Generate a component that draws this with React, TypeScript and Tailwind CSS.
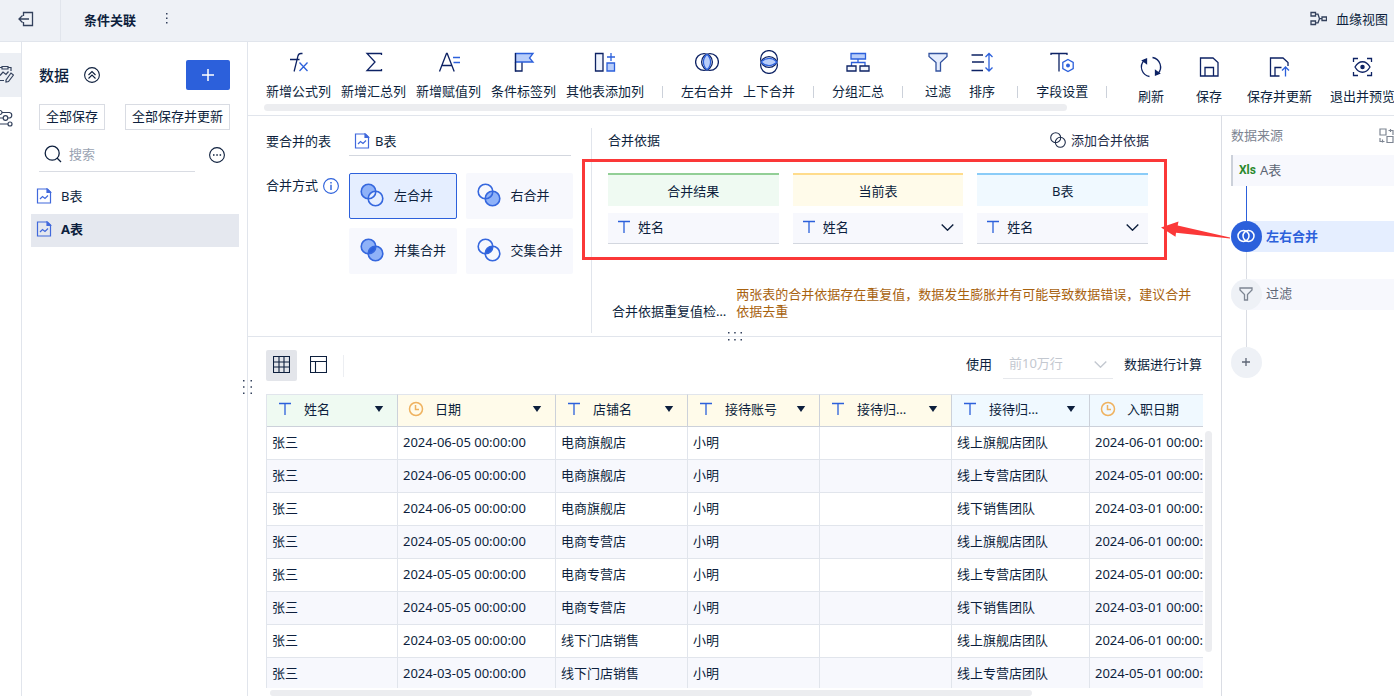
import React from "react";

type IconProps = { className?: string };
type ToolItem = { label: string; icon: React.ReactNode };

const NAVY = "#0d2264";
const BLUE = "#2c60db";

function Svg({ size, box, children, color = "currentColor", width = 1.3 }: { size: string; box: string; children: React.ReactNode; color?: string; width?: number }) {
  return (
    <svg className={`${size} shrink-0`} viewBox={box} fill="none" stroke={color} strokeWidth={width} aria-hidden="true">
      {children}
    </svg>
  );
}

const Tool = ({ children }: { children: React.ReactNode }) => (
  <Svg size="size-6" box="0 0 24 24" color={NAVY}>{children}</Svg>
);

const toolGroups: ToolItem[][] = [
  [
    {
      label: "新增公式列",
      icon: (
        <Tool>
          <path d="M15.500 3.500h-1.600c-1.800 0-2.600 1-3 2.700L7.100 21.500M3 9.500h9.500" />
          <path d="m12.500 12.500 8 8.500M20.500 12.500l-8 8.500" stroke={BLUE} />
        </Tool>
      ),
    },
    { label: "新增汇总列", icon: <Tool><path d="M19.500 5V3.500H5L13 12l-8 8.500h14.500V19" /></Tool> },
    {
      label: "新增赋值列",
      icon: (
        <Tool>
          <path d="m2.500 21.500 7-18h.7l7 18M5 15.500h9.800" />
          <path d="M16 7.500h7M16.500 12.500h6.500" stroke={BLUE} />
        </Tool>
      ),
    },
    {
      label: "条件标签列",
      icon: (
        <Tool>
          <path d="M3.500 12v9h6.500v-9" />
          <path d="M3.500 3.500h17.500l-3.500 4.500 3.500 4H3.500z" fill="#b9cefa" stroke={BLUE} />
          <path d="M3.500 3v18.500" />
        </Tool>
      ),
    },
    {
      label: "其他表添加列",
      icon: (
        <Tool>
          <path d="M2.500 3.500h7.500V21H2.500z" fill="#eef3fd" />
          <path d="M14 13h7.500v8H14z" fill="#b9cefa" stroke={BLUE} />
          <path d="M18 3v8M14 7h8" stroke={BLUE} />
        </Tool>
      ),
    },
  ],
  [
    {
      label: "左右合并",
      icon: (
        <Tool>
          <circle cx="9" cy="12" r="8.400" />
          <circle cx="15" cy="12" r="8.400" />
          <path d="M12 4.200c4.800 4.500 4.800 11.100 0 15.600-4.800-4.500-4.800-11.100 0-15.600" fill="#b9cefa" stroke={BLUE} />
        </Tool>
      ),
    },
    {
      label: "上下合并",
      icon: (
        <Tool>
          <circle cx="12" cy="9" r="8.400" />
          <circle cx="12" cy="15" r="8.400" />
          <path d="M4.200 12c4.500-4.800 11.100-4.800 15.600 0-4.500 4.800-11.100 4.800-15.600 0" fill="#b9cefa" stroke={BLUE} />
        </Tool>
      ),
    },
  ],
  [
    {
      label: "分组汇总",
      icon: (
        <Tool>
          <path d="M5 3.500h14.500v5.500H5z" fill="#b9cefa" stroke={BLUE} />
          <path d="M12 9v3.500M5.500 16v-3.500H19V16" stroke={BLUE} />
          <path d="M1 16h9v5H1zM14 16h9v5h-9z" fill="#f3f6fd" />
        </Tool>
      ),
    },
  ],
  [
    { label: "过滤", icon: <Tool><path d="M3 3.500h18v3l-6.500 6V21H10v-8.500l-7-6z" fill="#e4ecfd" stroke="#33539f" /></Tool> },
    {
      label: "排序",
      icon: (
        <Tool>
          <path d="M1.500 5H13M2 12h12M1.500 20.500H13" />
          <path d="M19 4v16.500M15.500 7 19 3.500 22.500 7M15.500 17.500 19 21l3.500-3.500" stroke={BLUE} />
        </Tool>
      ),
    },
  ],
  [
    {
      label: "字段设置",
      icon: (
        <Tool>
          <path d="M1 5V3.500h16V5M9 3.500v18" />
          <path d="m18 9.500 5.200 3v6L18 21.500l-5.200-3v-6z" fill="#fff" stroke={BLUE} />
          <circle cx="18" cy="15.500" r="1.300" fill={BLUE} stroke={BLUE} />
        </Tool>
      ),
    },
  ],
];

const actions: ToolItem[] = [
  {
    label: "刷新",
    icon: (
      <Tool>
        <path d="M10.500 21.500A9.600 9.600 0 0 1 5 5.500M13.500 2.500A9.600 9.600 0 0 1 19 18.500" />
        <path d="M3.500 5.500 7.500 4v4.500zM20.500 18.500l-4 1.500v-4.500z" fill={NAVY} />
      </Tool>
    ),
  },
  { label: "保存", icon: <Tool><path d="M3.500 3h12.500l5 4.500V21H3.500zM8 21v-8.500h8.500V21" /></Tool> },
  {
    label: "保存并更新",
    icon: (
      <Tool>
        <path d="M12.500 21h-9V3H16l5 4.500V11M8 21v-8.500h6.500" />
        <path d="M18.500 21.500v-9M15 15.500l3.500-3.500 3.500 3.500" stroke={BLUE} />
      </Tool>
    ),
  },
  {
    label: "退出并预览",
    icon: (
      <Tool>
        <path d="M3.500 7V3.500H8M17 3.500h4.500V7M3.500 17v3.500H8M17 20.500h4.500V17" />
        <path d="M5 12c4-7 11-7 15 0-4 7-11 7-15 0z" />
        <circle cx="12.500" cy="12" r="1.600" fill={NAVY} />
      </Tool>
    ),
  },
];

const FileIcon = () => (
  <Svg size="size-4" box="0 0 16 16" color="#4169dc" width={1.2}>
    <path d="M1.500 1h10l3 3v11h-13z" />
    <path d="M11 1v3.500h3.500z" fill="#4169dc" />
    <path d="m4 11 2.500-2.500L9 10.500 12 7.500" />
  </Svg>
);

const TextIcon = () => (
  <Svg size="size-4" box="0 0 16 16" color={BLUE} width={1.3}>
    <path d="M2 2.500h12M8 2.500V14" />
  </Svg>
);

const ClockIcon = () => (
  <Svg size="size-4" box="0 0 16 16" color="#efb25f" width={1.5}>
    <circle cx="8" cy="8" r="6.500" />
    <path d="M7.500 4v4.500H11" />
  </Svg>
);

const Chevron = ({ className = "" }: IconProps) => (
  <svg className={`pointer-events-none absolute h-[7px] w-[13px] ${className}`} viewBox="0 0 13 7" fill="none" stroke="currentColor" strokeWidth="1.4" aria-hidden="true">
    <path d="m.7.500 5.800 5.700L12.300.5" />
  </svg>
);

const FunnelIcon = () => (
  <Svg size="size-4" box="0 0 16 16" color="#7d8592">
    <path d="M2 2h12v2L9.500 8.500V14h-3V8.500L2 4z" />
  </Svg>
);

function JoinIcon({ left, right, mid }: { left: string; right: string; mid: string }) {
  return (
    <Svg size="size-6" box="0 0 24 24" color="#3567de" width={1.6}>
      <circle cx="8.500" cy="8.500" r="7.300" fill={left} stroke="none" />
      <circle cx="15.500" cy="15.500" r="7.300" fill={right} stroke="none" />
      <path d="M8.200 15.800A7.300 7.300 0 0 1 15.800 8.200 7.300 7.300 0 0 1 8.200 15.800z" fill={mid} stroke="none" />
      <circle cx="8.500" cy="8.500" r="7.300" />
      <circle cx="15.500" cy="15.500" r="7.300" />
    </Svg>
  );
}

const joins = [
  { label: "左合并", left: "#8fb2f8", right: "#e5eeff", mid: "#e5eeff" },
  { label: "右合并", left: "none", right: "#8fb2f8", mid: "#8fb2f8" },
  { label: "并集合并", left: "#8fb2f8", right: "#8fb2f8", mid: BLUE },
  { label: "交集合并", left: "none", right: "none", mid: BLUE },
];

const columns = [
  { name: "姓名", date: false, tone: "bg-[#effaf2]", width: "w-[131px]" },
  { name: "日期", date: true, tone: "bg-[#fffbea]", width: "w-[158px]" },
  { name: "店铺名", date: false, tone: "bg-[#fffbea]", width: "w-[132px]" },
  { name: "接待账号", date: false, tone: "bg-[#fffbea]", width: "w-[132px]" },
  { name: "接待归…", date: false, tone: "bg-[#fffbea]", width: "w-[132px]" },
  { name: "接待归…", date: false, tone: "bg-[#f0f9ff]", width: "w-[138px]" },
  { name: "入职日期", date: true, tone: "bg-[#f0f9ff]", width: "w-[158px]" },
];

const rows = [
  ["06-05", "电商旗舰店", "线上旗舰店团队", "06-01"],
  ["06-05", "电商旗舰店", "线上专营店团队", "05-01"],
  ["06-05", "电商旗舰店", "线下销售团队", "03-01"],
  ["05-05", "电商专营店", "线上旗舰店团队", "06-01"],
  ["05-05", "电商专营店", "线上专营店团队", "05-01"],
  ["05-05", "电商专营店", "线下销售团队", "03-01"],
  ["03-05", "线下门店销售", "线上旗舰店团队", "06-01"],
  ["03-05", "线下门店销售", "线上专营店团队", "05-01"],
].map(([date, shop, team, joined]) => ["张三", `2024-${date} 00:00:00`, shop, "小明", "", team, `2024-${joined} 00:00:00`]);

function ToolButton({ item, wide }: { item: ToolItem; wide?: boolean }) {
  return (
    <button className={`flex shrink-0 flex-col items-center gap-2 whitespace-nowrap ${wide ? "min-w-10" : "min-w-[34px]"}`}>
      {item.icon}
      <span>{item.label}</span>
    </button>
  );
}

function Header() {
  return (
    <header className="flex h-[42px] shrink-0 items-center border-b border-[#e1e5ec] bg-[#eef1f6]">
      <button aria-label="退出" className="flex h-full w-[61px] items-center border-r border-[#e1e5ec] pb-1 pl-[18px] text-[#33415c]">
        <Svg size="size-4" box="0 0 16 16">
          <path d="M5.500 5V1.500h9v13h-9V11M11 8H1M4.500 4.500 1 8l3.500 3.500" />
        </Svg>
      </button>
      <h1 className="pb-0.5 pl-[23px] font-bold">条件关联</h1>
      <button aria-label="更多" className="ml-[23px] pb-1.5">
        <svg className="size-4" viewBox="0 0 16 16" fill="#33415c" aria-hidden="true">
          <path d="M7 3h1.500v1.500H7zM7 7.500h1.500V9H7zM7 12h1.500v1.500H7z" />
        </svg>
      </button>
      <button className="mr-1.5 ml-auto flex items-center gap-[9px] pb-1">
        <Svg size="size-[17px]" box="0 0 17 17" color="#33415c">
          <path d="M1 2.500h4.500V6H1zM1 11h4.500v3.500H1zM12 7h4.500v3.500H12zM5.500 4.200H8l1.500 4.500L8 12.800H5.500M9.500 8.700H12" />
        </Svg>
        血缘视图
      </button>
    </header>
  );
}

function Sidebar() {
  return (
    <aside className="w-[226px] shrink-0 border-r border-[#e1e5ec] pt-[18px]">
      <div className="flex items-center pr-[17px] pl-[17px]">
        <h2 className="text-[15px] font-medium">数据</h2>
        <button aria-label="收起" className="ml-[15px]">
          <Svg size="size-4" box="0 0 16 16" width={1.1}>
            <circle cx="8" cy="8" r="7.400" />
            <path d="m4.500 8 3.500-3.500L11.500 8M4.500 11.500 8 8l3.500 3.500" />
          </Svg>
        </button>
        <button aria-label="新增" className="ml-auto flex h-[30px] w-11 items-center justify-center rounded-[2px] bg-[#2c60db] text-white">
          <Svg size="size-3.5" box="0 0 14 14" width={1.5}><path d="M7 1v12M1 7h12" /></Svg>
        </button>
      </div>
      <div className="mt-3.5 flex justify-between pr-[17px] pl-[17px]">
        <button className="h-[26px] border border-[#d9dce3] px-1.5 pb-0.5">全部保存</button>
        <button className="h-[26px] border border-[#d9dce3] px-1.5 pb-0.5">全部保存并更新</button>
      </div>
      <div className="mt-[9px] flex items-center pr-[22px] pl-[17px]">
        <label className="flex h-[33px] min-w-0 flex-1 items-center gap-[7px] border-b border-[#d9dce3] pb-0.5 pl-[5px]">
          <Svg size="size-[18px]" box="0 0 18 18">
            <circle cx="8.200" cy="8.200" r="7" />
            <path d="m13 13 4 4" />
          </Svg>
          <input aria-label="搜索" placeholder="搜索" className="w-full min-w-0 outline-none placeholder:text-[#9aa3b2]" />
        </label>
        <button aria-label="更多" className="ml-3.5 pb-0.5">
          <Svg size="size-4" box="0 0 16 16" width={1.1}>
            <circle cx="8" cy="8" r="7.400" />
            <path d="M4 8h1.500M7.300 8h1.500M10.600 8h1.500" strokeWidth="1.500" />
          </Svg>
        </button>
      </div>
      <ul className="mt-[9px] pr-2 pl-[9px]">
        <li><button className="flex h-[33px] w-full items-center gap-[9px] pb-1 pl-[5px]"><FileIcon />B表</button></li>
        <li><button className="flex h-[33px] w-full items-center gap-[9px] bg-[#e5e8ef] pb-1 pl-[5px] font-bold"><FileIcon />A表</button></li>
      </ul>
    </aside>
  );
}

function Rail() {
  return (
    <nav className="w-[22px] shrink-0 overflow-hidden border-r border-[#e1e5ec] pt-[11px] text-[#33415c]">
      <button aria-label="数据编辑" className="flex h-11 w-full items-center justify-end bg-[#eceff4] pr-[7px] pb-0.5">
        <Svg size="size-[18px]" box="0 0 18 18" width={1.2}>
          <path d="M6 2.500H2v13h6M12 2.500h3V6M6 1.500h6v2.500H6zM4 10.500 7 7l3 2.500 2.500-3M10 15l5-7 2.500 2-5 6.500-2.500.5z" />
        </Svg>
      </button>
      <button aria-label="流程" className="flex h-11 w-full items-center justify-end pr-2 pb-0.5">
        <Svg size="size-[18px]" box="0 0 18 18" width={1.2}>
          <path d="M7 3.500h7.500a2.800 2.800 0 0 1 0 5.500H13M8 9H4a2.800 2.800 0 0 0 0 6h9" />
          <circle cx="5" cy="3.500" r="2" />
          <circle cx="10.500" cy="9" r="2.300" />
          <circle cx="15" cy="15" r="2" />
        </Svg>
      </button>
    </nav>
  );
}

function Toolbar() {
  return (
    <div className="flex h-[74px] shrink-0 border-b border-[#e1e5ec]">
      <div className="flex min-w-0 flex-1 flex-col justify-between overflow-hidden pt-2 pb-1">
        <div className="flex gap-[18px] pl-[18px]">
          {toolGroups.map((group, i) => (
            <React.Fragment key={i}>
              <div className="flex gap-[10px]">
                {group.map((item) => <ToolButton key={item.label} item={item} />)}
              </div>
              <span className="mt-9 h-3 w-px bg-[#ccd1da]" />
            </React.Fragment>
          ))}
        </div>
        <div className="mr-16 ml-4 h-[7px] shrink-0 rounded-full bg-[#ecedf0]" />
      </div>
      <div className="-mr-px flex shrink-0 gap-[18px] pt-[13px]">
        {actions.map((item) => <ToolButton key={item.label} item={item} wide />)}
      </div>
    </div>
  );
}

function FieldSelect({ label }: { label: string }) {
  return (
    <div className="relative flex h-[31px] items-center border-b border-[#d3d7df] bg-[#f7f8fd] pb-0.5 pl-2">
      <TextIcon />
      <select aria-label={label} className="h-full w-full appearance-none bg-transparent pl-1.5 outline-none">
        <option>姓名</option>
      </select>
      <Chevron className="top-[11px] right-[9px]" />
    </div>
  );
}

function MergeSettings() {
  return (
    <section className="relative z-10 flex h-[221px] shrink-0 border-b border-[#e1e5ec] pt-3 pb-[3px]">
      <div className="grid w-[344px] shrink-0 grid-cols-[83px_1fr] content-start border-r border-[#e1e5ec] pr-[18px] pl-[18px]">
        <label htmlFor="merge-table" className="flex h-[27px] items-center pb-0.5">要合并的表</label>
        <div className="mr-0.5 flex h-7 items-center border-b border-[#d3d7df] pb-0.5 pl-[5px]">
          <FileIcon />
          <select id="merge-table" className="w-full appearance-none bg-transparent pl-[5px] outline-none"><option>B表</option></select>
        </div>
        <div className="mt-[18px] flex items-start gap-[5px] pt-0.5">
          <span className="whitespace-nowrap">合并方式</span>
          <span className="pt-0.5 text-[#2c60db]">
            <Svg size="size-4" box="0 0 16 16" width={1.1}>
              <circle cx="8" cy="8" r="7.400" />
              <path d="M8 6.800V12M8 4v1.400" strokeWidth="1.400" />
            </Svg>
          </span>
        </div>
        <div className="mt-[17px] grid grid-cols-2 gap-[9px]">
          {joins.map((join, i) => (
            <button
              key={join.label}
              className={`flex h-[46px] items-center gap-[10px] rounded-[2px] border pb-0.5 pl-[10px] whitespace-nowrap ${i === 0 ? "border-[#2c60db] bg-[#e5eeff]" : "border-transparent bg-[#f7f8fd]"}`}
            >
              <JoinIcon left={join.left} right={join.right} mid={join.mid} />
              {join.label}
            </button>
          ))}
        </div>
      </div>

      <div className="flex min-w-0 flex-1 flex-col pl-4">
        <div className="mr-[72px] flex h-[26px] items-center justify-between pb-0.5">
          <h3>合并依据</h3>
          <button className="flex items-center gap-[5px] text-[#1f2d4a]">
            <Svg size="size-4" box="0 0 16 16" width={1.1}>
              <circle cx="5.700" cy="5.700" r="5" />
              <circle cx="10.300" cy="10.300" r="5" />
            </Svg>
            添加合并依据
          </button>
        </div>
        <div className="relative mt-[19px] mr-[73px] grid grid-cols-3 gap-x-3.5 gap-y-[7px]">
          <div className="flex h-[33px] items-center justify-center border-t-2 border-[#92cf96] bg-[#effaf2]">合并结果</div>
          <div className="flex h-[33px] items-center justify-center border-t-2 border-[#ffdc8c] bg-[#fffbea]">当前表</div>
          <div className="flex h-[33px] items-center justify-center border-t-2 border-[#8accf8] bg-[#f0f9ff]">B表</div>
          <div className="flex h-[31px] items-center gap-1.5 border-b border-[#d3d7df] bg-[#f7f8fd] pb-0.5 pl-2"><TextIcon />姓名</div>
          <FieldSelect label="当前表字段" />
          <FieldSelect label="B表字段" />
          <div className="pointer-events-none absolute -top-3.5 -right-[19px] -bottom-4 -left-[26px] border-[3px] border-[#fb3838]">
            <svg className="absolute top-[58px] -right-[67px] h-[22px] w-[70px]" viewBox="0 0 70 22" fill="#fb3838" aria-hidden="true">
              <path d="m0 7.500 17.500-6-.8 4L69 17.500v1L15 12.800l-.5 4z" />
            </svg>
          </div>
        </div>
        <div className="mt-[42px] flex items-end gap-[10px] pr-6 pl-1 leading-[17px]">
          <span className="whitespace-nowrap">合并依据重复值检…</span>
          <p className="flex-1 text-[#a8620f]">两张表的合并依据存在重复值，数据发生膨胀并有可能导致数据错误，建议合并依据去重</p>
        </div>
      </div>
      <svg className="absolute -bottom-1.5 left-1/2 h-3 w-4 -translate-x-1/2" viewBox="0 0 16 12" fill="#33415c" aria-hidden="true">
        <path d="M1 2h1.500v1.500H1zM7.200 2h1.500v1.500H7.200zM13.500 2H15v1.500h-1.500zM1 9h1.500v1.500H1zM7.200 9h1.500v1.500H7.200zM13.500 9H15v1.500h-1.500z" />
      </svg>
    </section>
  );
}

function DataGrid() {
  return (
    <section className="relative flex min-h-0 flex-1 flex-col pt-[13px]">
      <svg className="absolute top-10 -left-[7px] h-[17px] w-3" viewBox="0 0 12 17" fill="#33415c" aria-hidden="true">
        <path d="M2 3h1.500v1.500H2zM9.500 3H11v1.500H9.500zM2 9.200h1.500v1.500H2zM9.500 9.200H11v1.500H9.500zM2 15.500h1.500V17H2zM9.500 15.500H11V17H9.500z" />
      </svg>
      <div className="flex h-[31px] shrink-0 items-center pr-[18px] pl-[18px]">
        <button aria-label="表格视图" className="flex size-[31px] items-center justify-center rounded-[2px] bg-[#e3e5ea] pb-0.5">
          <Svg size="size-[17px]" box="0 0 17 17" width={1.1}><path d="M.5.500h16v16H.5zM.5 6h16M.5 11h16M6 .500v16M11 .500v16" /></Svg>
        </button>
        <button aria-label="结构视图" className="ml-[13px] pb-0.5">
          <Svg size="size-[17px]" box="0 0 17 17" width={1.1}><path d="M.5.500h16v16H.5zM.5 5.500h16M5.500 5.500v11" /></Svg>
        </button>
        <span className="ml-4 h-[22px] w-px bg-[#eceef2]" />
        <div className="ml-auto flex items-center pb-0.5">
          <label htmlFor="row-limit" className="pb-0.5">使用</label>
          <div className="relative mx-[11px] h-[29px] w-[110px] border-b border-[#e6e8ec] pb-0.5 text-[#c3c8d0]">
            <select id="row-limit" className="h-full w-full appearance-none bg-transparent pl-1.5 outline-none"><option>前10万行</option></select>
            <Chevron className="top-[11px] right-1.5" />
          </div>
          <span className="pr-px pb-0.5">数据进行计算</span>
        </div>
      </div>
      <div className="mt-[13px] flex min-h-0 flex-1 pr-[9px] pl-[18px]">
        <div className="min-w-0 flex-1 overflow-hidden">
          <table className="w-[981px] table-fixed border-separate border-spacing-0 border-l border-[#e1e5ec]">
            <thead>
              <tr className="h-[33px]">
                {columns.map((col, i) => (
                  <th key={i} className={`${col.width} ${col.tone} h-[33px] border-t border-r border-b border-t-[#e1e5ec] border-r-[#ccd1da] border-b-[#ccd1da] p-0 font-normal`}>
                    <div className="flex items-center pr-[13px] pb-[3px] pl-[10px]">
                      {col.date ? <ClockIcon /> : <TextIcon />}
                      <span className="ml-[11px] whitespace-nowrap">{col.name}</span>
                      <svg className="ml-auto h-1.5 w-2.5 shrink-0" viewBox="0 0 10 6" fill="#0d1f3d" aria-hidden="true"><path d="M.8 0h8.400L5 6z" /></svg>
                    </div>
                  </th>
                ))}
              </tr>
            </thead>
            <tbody>
              {rows.map((row, r) => (
                <tr key={r} className="h-[33px] even:bg-[#f7f8fd]">
                  {row.map((cell, c) => (
                    <td key={c} className="h-[33px] border-r border-b border-[#e1e5ec] pt-0 pr-0 pb-0.5 pl-[5px] whitespace-nowrap">{cell}</td>
                  ))}
                </tr>
              ))}
            </tbody>
          </table>
        </div>
        <div className="mt-[37px] mb-9 ml-0.5 w-[7px] rounded-full bg-[#ecedf0]" />
      </div>
      <div className="mt-0.5 mr-[189px] ml-[22px] h-1.5 shrink-0 rounded-full bg-[#ecedf0]" />
    </section>
  );
}

function FlowPanel() {
  return (
    <aside className="w-[173px] shrink-0 overflow-hidden border-l border-[#dadde4] pt-[9px] pl-[9px]">
      <div className="flex h-5 items-center justify-between text-[#7d8592]">
        <h3 className="pb-px">数据来源</h3>
        <button aria-label="切换布局">
          <Svg size="size-[15px]" box="0 0 15 15" width={1.2}>
            <path d="M1 1h6v6H1zM8 8.500h6v6H8zM9.500 2.500H14V7M11.500 1v3M1 10v3.500h4.500M3.500 11.500v3" />
          </Svg>
        </button>
      </div>
      <button className="mt-2.5 flex h-[31px] w-full items-center gap-1 border-l-2 border-[#ccd1da] bg-[#f7f8fd] pb-0.5 pl-1.5 text-[#5d6675]">
        <span className="font-['Roboto',sans-serif] text-xs font-bold text-[#2b8a2f]">Xls</span>A表
      </button>
      <div className="ml-[15px] h-[35px] w-px bg-[#2c60db]" />
      <button className="flex h-[31px] w-full items-center gap-1 rounded-l-full bg-[#e5eeff] font-bold text-[#2c60db]">
        <span className="flex size-[31px] items-center justify-center rounded-full bg-[#2c60db] pr-px pb-0.5 text-white">
          <Svg size="size-[18px]" box="0 0 18 18" width={1.5}>
            <circle cx="6.500" cy="9" r="5.500" />
            <circle cx="11.500" cy="9" r="5.500" />
          </Svg>
        </span>
        <span className="pb-0.5">左右合并</span>
      </button>
      <div className="ml-[15px] h-[27px] w-px bg-[#dadde4]" />
      <button className="flex h-[31px] w-full items-center gap-1 rounded-l-full bg-[#f7f8fd] text-[#5d6675]">
        <span className="flex size-[31px] items-center justify-center rounded-full bg-[#eef1f6] pr-px pb-0.5"><FunnelIcon /></span>
        <span className="pb-[3px]">过滤</span>
      </button>
      <div className="ml-[15px] h-[37px] w-px bg-[#dadde4]" />
      <button aria-label="添加步骤" className="flex size-[31px] items-center justify-center rounded-full bg-[#eef1f6] pr-px pb-px text-[#5d6675]">
        <Svg size="size-2.5" box="0 0 10 10"><path d="M5 1v8M1 5h8" /></Svg>
      </button>
    </aside>
  );
}

export default function App() {
  return (
    <div className="flex h-screen flex-col overflow-hidden bg-white font-['Noto_Sans','Noto_Sans_CJK_SC',sans-serif] text-[13px] leading-[18px] text-[#0d1f3d]">
      <Header />
      <div className="flex min-h-0 flex-1">
        <Rail />
        <Sidebar />
        <div className="flex min-w-0 flex-1 flex-col">
          <Toolbar />
          <div className="flex min-h-0 flex-1">
            <main className="flex min-w-0 flex-1 flex-col">
              <MergeSettings />
              <DataGrid />
            </main>
            <FlowPanel />
          </div>
        </div>
      </div>
    </div>
  );
}
